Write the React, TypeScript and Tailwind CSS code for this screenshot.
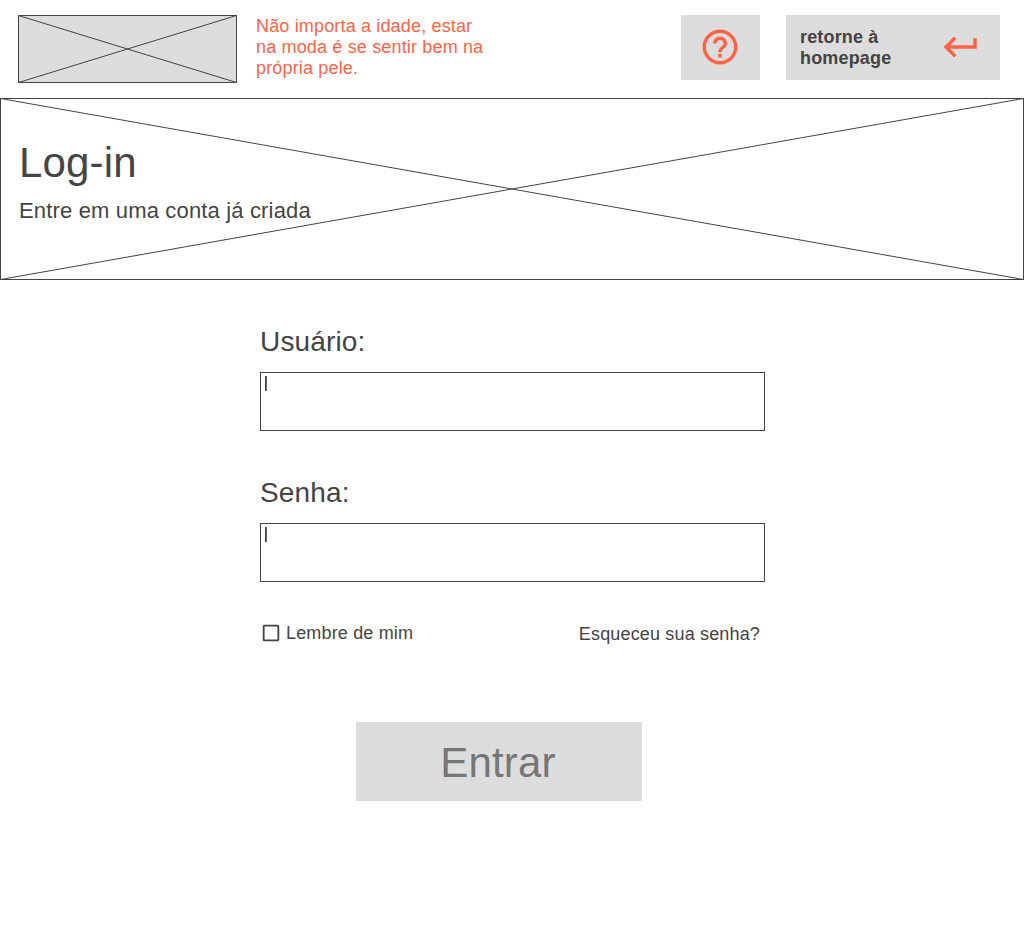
import { MdHelpOutline, MdKeyboardReturn, MdCheckBoxOutlineBlank } from "react-icons/md";

function Placeholder({ width, height, className }: { width: number; height: number; className: string }) {
  return (
    <svg width={width} height={height} className={className} fill="none" stroke="#444444" strokeWidth="1">
      <rect x="0.5" y="0.5" width={width - 1} height={height - 1} />
      <path d={`M0.5 0.5L${width - 0.5} ${height - 0.5}M${width - 0.5} 0.5L0.5 ${height - 0.5}`} />
    </svg>
  );
}

function Field({ label }: { label: string }) {
  return (
    <label className="block h-[151px]">
      <span className="block h-[52px] text-[28px] leading-[43px]">{label}</span>
      <span className="block h-[59px] w-[505px] border border-[#444444] pt-[3px] pl-[4px]">
        <span className="block h-[15px] w-[2px] border-r border-[#666666] bg-[#444444]" />
      </span>
    </label>
  );
}

export default function App() {
  return (
    <div className="h-[948px] w-[1024px] overflow-hidden bg-white font-['Liberation_Sans',Arial,sans-serif] tracking-[0.16px] text-[#444444]">
      <header className="flex h-[98px] items-start pt-[15px] pl-[18px]">
        <Placeholder width={219} height={68} className="shrink-0 bg-[#dddddd]" />
        <p className="mt-px ml-[19px] w-[425px] text-[18px] leading-[21px] text-[#ff6347]">
          Não importa a idade, estar<br />na moda é se sentir bem na<br />própria pele.
        </p>
        <button className="flex h-[65px] w-[79px] items-start bg-[#dddddd] pt-[11px] pl-[18px] text-[#ff6347]">
          <MdHelpOutline size={42} />
        </button>
        <button className="ml-[26px] flex h-[65px] w-[214px] items-start justify-between bg-[#dddddd] pt-[11px] pr-[18px] pl-[14px]">
          <span className="mt-px text-left text-[18px] leading-[21px] font-bold">retorne à<br />homepage</span>
          <MdKeyboardReturn size={42} color="#ff6347" />
        </button>
      </header>
      <section className="grid h-[182px] w-[1024px]">
        <Placeholder width={1024} height={182} className="col-start-1 row-start-1" />
        <div className="col-start-1 row-start-1 pt-[40px] pl-[19px]">
          <h1 className="text-[42px] leading-[49px]">Log-in</h1>
          <p className="mt-[11px] text-[22px] leading-[26px]">Entre em uma conta já criada</p>
        </div>
      </section>
      <main className="pt-[40px] pl-[260px]">
        <Field label="Usuário:" />
        <Field label="Senha:" />
        <div className="flex h-[24px] w-[500px] items-start justify-between text-[18px] leading-[24px]">
          <span className="-mt-px flex items-center gap-[4px]"><MdCheckBoxOutlineBlank size={22} />Lembre de mim</span>
          <a>Esqueceu sua senha?</a>
        </div>
        <button className="mt-[76px] ml-[96px] flex h-[79px] w-[286px] items-center justify-center bg-[#dddddd] pt-[2px] pr-[2px] text-[42px] text-[#777777]">Entrar</button>
      </main>
    </div>
  );
}
